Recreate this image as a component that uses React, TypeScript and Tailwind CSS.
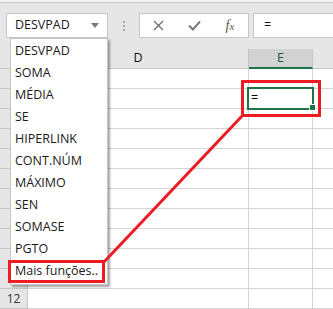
import React from "react";

const items = [
  "DESVPAD",
  "SOMA",
  "MÉDIA",
  "SE",
  "HIPERLINK",
  "CONT.NÚM",
  "MÁXIMO",
  "SEN",
  "SOMASE",
  "PGTO",
  "Mais funções..",
];

const rows = Array.from({ length: 12 }, (_, i) => i + 1);

export default function App() {
  return (
    <div
      className="relative w-[333px] h-[309px] overflow-hidden bg-[#e6e6e6] text-[#1a1a1a]"
      style={{ fontFamily: '"Open Sans", "Noto Sans", sans-serif' }}
    >
      {/* window top edge */}
      <div className="h-[2px] bg-[#f3f3f3]" />
      <div className="h-px bg-[#c8c8c8]" />

      {/* toolbar */}
      <div className="h-[46px] flex items-start pt-[10px]">
        <div className="ml-[6px] w-[102px] h-[25px] bg-white border border-[#c6c6c6] flex items-center justify-between pl-[8px] pr-[8px]">
          <span className="text-[12.5px] leading-none">DESVPAD</span>
          <svg width="8" height="5" viewBox="0 0 8 5">
            <path d="M0 0 L8 0 L4 5 Z" fill="#7a7a7a" />
          </svg>
        </div>
        <div className="w-[31px] h-[25px] flex flex-col items-center justify-center gap-[2px]">
          <div className="w-[2px] h-[2px] bg-[#a8a8a8]" />
          <div className="w-[2px] h-[2px] bg-[#a8a8a8]" />
          <div className="w-[2px] h-[2px] bg-[#a8a8a8]" />
        </div>
        <div className="w-[110px] h-[25px] bg-white border border-[#c6c6c6] flex items-center">
          <div className="w-[36px] flex justify-center">
            <svg width="11" height="11" viewBox="0 0 11 11">
              <path d="M1 1 L10 10 M10 1 L1 10" stroke="#6e6e6e" strokeWidth="1.3" />
            </svg>
          </div>
          <div className="w-[36px] flex justify-center">
            <svg width="13" height="11" viewBox="0 0 13 11">
              <path d="M1 5.5 L4.8 9.5 L12 1.5" stroke="#7a7a7a" strokeWidth="2" fill="none" />
            </svg>
          </div>
          <div className="w-[36px] flex justify-center">
            <span
              className="italic text-[14px] leading-none text-[#555]"
              style={{ fontFamily: '"Liberation Serif", serif' }}
            >
              f<span className="text-[11px]">x</span>
            </span>
          </div>
        </div>
        <div className="ml-[4px] flex-1 h-[25px] bg-white border border-[#c6c6c6] border-r-0 flex items-center pl-[10px]">
          <span className="text-[12.5px] leading-none">=</span>
        </div>
      </div>

      {/* column header */}
      <div className="flex h-[20px]">
        <div className="w-[28px] border-r border-b border-[#c6c6c6]" />
        <div className="w-[221px] border-r border-b border-[#c6c6c6] flex items-center justify-center text-[12.5px] text-[#111]">
          D
        </div>
        <div className="w-[64px] bg-[#d2d2d2] border-r border-[#c6c6c6] border-b-2 border-b-[#217346] flex items-center justify-center text-[12.5px] text-[#1e5a38]">
          E
        </div>
        <div className="flex-1 border-b border-[#c6c6c6]" />
      </div>

      {/* rows */}
      {rows.map((r) => (
        <div key={r} className="flex h-[20px]">
          <div className="w-[28px] border-r border-b border-[#c6c6c6] flex items-center justify-center text-[12px] text-[#333]">
            {r >= 11 ? r : ""}
          </div>
          <div className="w-[221px] bg-white border-r border-b border-[#d4d4d4]" />
          <div className="w-[64px] bg-white border-r border-b border-[#d4d4d4] flex items-center pl-[2px] text-[12.5px] text-black">
            {r === 2 ? "=" : ""}
          </div>
          <div className="flex-1 bg-white border-b border-[#d4d4d4]" />
        </div>
      ))}

      {/* selected cell */}
      <div className="absolute left-[247px] top-[87px] w-[67px] h-[23px] border-2 border-[#217346]" />
      <div className="absolute left-[309px] top-[104px] w-[7px] h-[7px] bg-[#217346] border border-white" />

      {/* dropdown list */}
      <div className="absolute left-[10px] top-[38px] w-[98px] h-[247px] bg-white border border-[#c6c6c6] shadow-[2px_2px_2px_rgba(0,0,0,0.35)] pt-px">
        {items.map((it) => (
          <div key={it} className="h-[22px] flex items-center pl-[4px] text-[12.5px] leading-none whitespace-nowrap">
            {it}
          </div>
        ))}
      </div>

      {/* annotations */}
      <div className="absolute left-[241px] top-[80px] w-[80px] h-[37px] border-[3px] border-[#ed1c24]" />
      <div className="absolute left-[8px] top-[260px] w-[97px] h-[23px] border-[3px] border-[#ed1c24]" />
      <svg className="absolute left-0 top-0" width="333" height="309" viewBox="0 0 333 309">
        <line x1="243" y1="115" x2="104" y2="262" stroke="#ed1c24" strokeWidth="3" />
      </svg>
    </div>
  );
}
